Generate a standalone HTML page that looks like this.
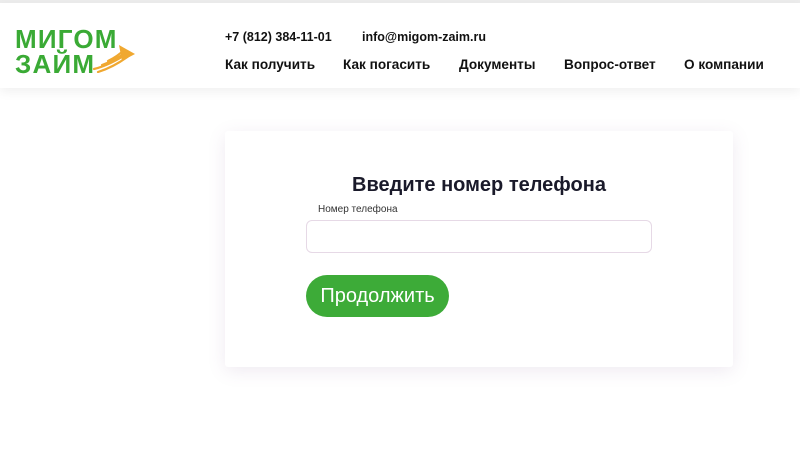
<!DOCTYPE html>
<html><head><meta charset="utf-8"><style>
*{margin:0;padding:0;box-sizing:border-box}
body{width:800px;height:465px;background:#fff;font-family:"Liberation Sans",Arial,sans-serif;position:relative;overflow:hidden}
.top{position:absolute;top:0;left:0;width:800px;height:3px;background:#ececec}
.hdr{position:absolute;top:3px;left:0;width:800px;height:85px;background:#fff;box-shadow:0 4px 10px rgba(0,0,0,0.06)}
.logo{position:absolute;left:15px;font-weight:bold;color:#3aaa35;font-size:26px;letter-spacing:1.2px;line-height:1}
.c{position:absolute;font-size:12.5px;color:#111;font-weight:bold}
.nav{position:absolute;font-size:13.6px;font-weight:bold;color:#111}
.card{position:absolute;left:225px;top:131px;width:508px;height:236px;background:#fff;box-shadow:0 4px 18px rgba(120,80,140,0.12);border-radius:3px}
h1{position:absolute;left:0;width:508px;top:43px;text-align:center;font-size:20px;color:#1a1a2a}
.lbl{position:absolute;left:93px;top:73px;font-size:10px;color:#333}
.inp{position:absolute;left:81px;top:89px;width:346px;height:33px;border:1px solid #e6d9e6;border-radius:6px}
.btn{position:absolute;left:81px;top:144px;width:143px;height:42px;border-radius:21px;background:#3dab38;color:#fff;font-size:20px;text-align:center;line-height:42px}
</style></head><body>
<div class="top"></div>
<div class="hdr">
<div class="logo" style="top:23px">МИГОМ</div>
<div class="logo" style="top:48px">ЗАЙМ</div>
<svg style="position:absolute;left:92px;top:40px" width="46" height="30" viewBox="0 0 46 30">
<g stroke="#f0a830" stroke-width="2.2" fill="none" stroke-linecap="round">
<path d="M2 26 Q18 22 36 10"/><path d="M6 29 Q22 24 38 12"/><path d="M10 22 Q24 17 34 9"/><path d="M16 18 Q26 13 32 7"/>
</g><path d="M27 2 L43 11 L30 18 Z" fill="#f0a830"/></svg>
<div class="c" style="left:225px;top:27px">+7 (812) 384-11-01</div>
<div class="c" style="left:362px;top:27px">info@migom-zaim.ru</div>
<div class="nav" style="left:225px;top:54px">Как получить</div>
<div class="nav" style="left:343px;top:54px">Как погасить</div>
<div class="nav" style="left:459px;top:54px">Документы</div>
<div class="nav" style="left:564px;top:54px">Вопрос-ответ</div>
<div class="nav" style="left:684px;top:54px">О компании</div>
</div>
<div class="card">
<h1>Введите номер телефона</h1>
<div class="lbl">Номер телефона</div>
<div class="inp"></div>
<div class="btn">Продолжить</div>
</div>
</body></html>
